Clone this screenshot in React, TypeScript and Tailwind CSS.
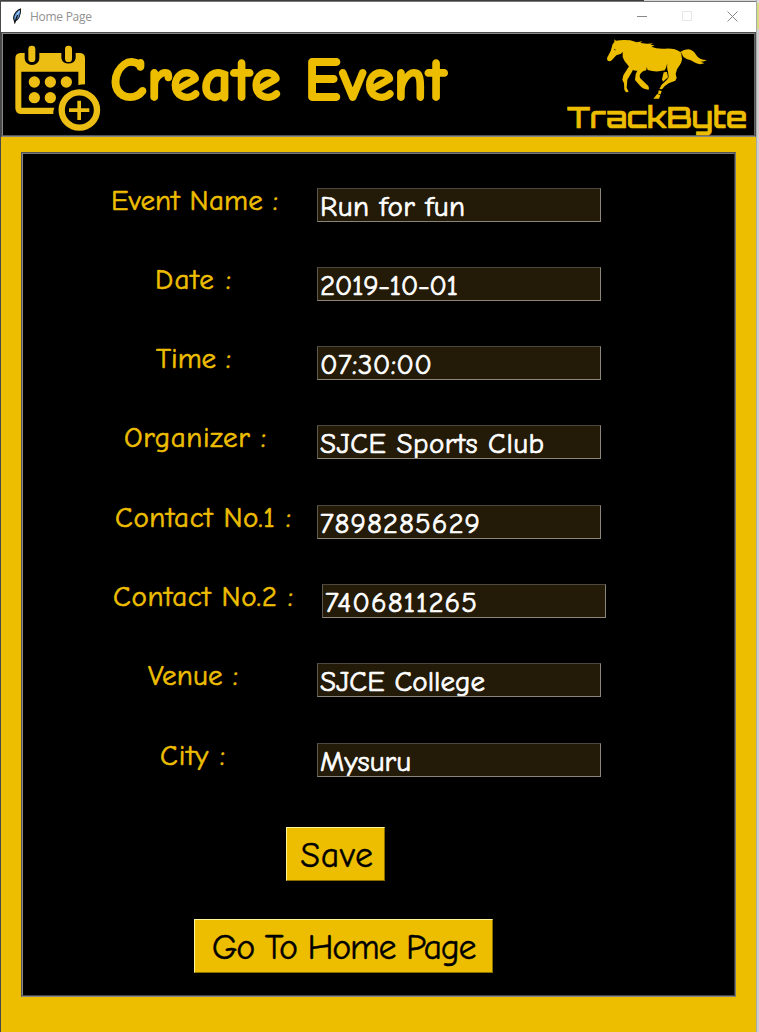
import React, { useLayoutEffect, useRef, useState } from 'react';

const script = "font-['Comic_Sans_MS','Comic_Neue','Noto_Sans',sans-serif]";

/** One line of text, tracked so that it fills the given width. */
function FitText({ text, width, className = '' }: { text: string; width: number; className?: string }) {
  const ref = useRef<HTMLSpanElement>(null);
  const [spacing, setSpacing] = useState(0);
  useLayoutEffect(() => {
    const measure = () => {
      const el = ref.current;
      if (!el) return;
      el.style.letterSpacing = '0px';
      const natural = el.getBoundingClientRect().width;
      const next = (width - natural) / Math.max(1, text.length - 1);
      el.style.letterSpacing = `${next}px`;
      setSpacing(next);
    };
    measure();
    document.fonts?.ready.then(measure);
  }, [text, width]);
  return (
    <span ref={ref} className={`inline-block whitespace-pre ${className}`} style={{ letterSpacing: `${spacing}px` }}>
      {text}
    </span>
  );
}

type Row = { label: string; lw: number; pad: string; value: string; vw: number; height: string; shift?: string };

const rows: Row[] = [
  { label: 'Event Name :', lw: 167, pad: 'pl-[88px]', value: 'Run for fun', vw: 145, height: 'h-[79px]' },
  { label: 'Date :', lw: 76, pad: 'pl-[132px]', value: '2019-10-01', vw: 138, height: 'h-[79px]' },
  { label: 'Time :', lw: 75, pad: 'pl-[133px]', value: '07:30:00', vw: 112, height: 'h-[79px]' },
  { label: 'Organizer :', lw: 142, pad: 'pl-[101px]', value: 'SJCE Sports Club', vw: 224, height: 'h-[80px]' },
  { label: 'Contact No.1 :', lw: 176, pad: 'pl-[92px]', value: '7898285629', vw: 160, height: 'h-[79px]' },
  { label: 'Contact No.2 :', lw: 180, pad: 'pl-[90px]', value: '7406811265', vw: 152, height: 'h-[79px]', shift: 'ml-[5px]' },
  { label: 'Venue :', lw: 90, pad: 'pl-[125px]', value: 'SJCE College', vw: 165, height: 'h-[80px]' },
  { label: 'City :', lw: 65, pad: 'pl-[137px]', value: 'Mysuru', vw: 91, height: 'h-[84px]' },
];

function Feather() {
  return (
    <svg width="12" height="18" viewBox="0 0 12 18">
      <path d="M9.5 1C6 2 3 6 2.5 10L3.5 13.5C7 12 10 7.500 9.5 1Z" fill="#5b96dc" stroke="#161616" strokeWidth="1.1" />
      <path d="M8.500 3L4.500 9" stroke="#a9cdf7" strokeWidth="1.2" />
      <path d="M6.500 7L3.500 15.500" stroke="#111" strokeWidth="1.2" />
    </svg>
  );
}

function CalendarPlus() {
  return (
    <svg width="86" height="87" viewBox="44 136 258 261" fill="#ecbd12">
      <path d="M60 160H73V176A22 20 0 0 0 117 176V160H183V176A22 20 0 0 0 226 176V160H240Q254 162 254 175V254Q244 254 234 256V216H63V324H162Q158 333 159 343H61Q45 342 45 325V176Q45 161 60 160Z" />
      <rect x="84" y="138" width="21" height="49" rx="10" />
      <rect x="194" y="138" width="21" height="49" rx="10" />
      <circle cx="102" cy="247" r="17" />
      <circle cx="150" cy="247" r="17" />
      <circle cx="198" cy="247" r="17" />
      <circle cx="102" cy="294" r="17" />
      <circle cx="150" cy="294" r="17" />
      <circle cx="237" cy="331" r="53" fill="none" stroke="#ecbd12" strokeWidth="19" />
      <path d="M231 303H242V326H267V337H242V361H231V337H206V326H231Z" />
    </svg>
  );
}

function Horse() {
  return (
    <svg width="103" height="62" viewBox="138 25 309 186" fill="#edbe00">
      <path d="M163 29L168 33Q188 29 211 32L230 38L247 35L241 40L262 42L279 41L271 45L284 47L274 51Q292 59 316 57Q344 55 361 67Q371 59 385 59Q400 61 408 75Q417 91 441 91Q432 97 420 96Q430 98 433 101Q416 107 403 98Q393 90 380 88Q370 84 364 74Q370 91 359 107Q348 119 347 133L350 145L346 153L326 161Q315 167 306 179L298 178L305 165L321 150L326 142L324 126Q320 118 322 101Q318 117 314 122Q288 129 263 121L260 112L259 122Q245 123 239 137L240 145L261 165Q269 171 266 180Q248 178 240 168L225 151L227 134L232 123Q215 124 205 108Q192 96 188 82L188 66L183 72L169 77L156 91Q149 98 142 92L141 85L152 64L158 43L163 38Z" />
      <path d="M209 107L219 120L217 125L202 150L200 174L206 186L198 188L193 180L192 161L187 150L190 137Z" />
      <path d="M311 128L321 127L324 143L309 156L306 149Z" />
      <path d="M296 182L305 184L302 194L294 193Z" />
      <path d="M292 192L301 197L297 207L280 207Z" />
      <path d="M162 59L167 61" stroke="#000" strokeWidth="2" />
      <path d="M363 69Q368 76 366 84" fill="none" stroke="#000" strokeWidth="2" />
    </svg>
  );
}

export default function App() {
  return (
    <div className="h-[1032px] w-[759px] overflow-hidden bg-[#494647] flex">
      <div className="w-px shrink-0 bg-[#484848]" />
      <main className="w-[755px] shrink-0 bg-[#edbe00] flex flex-col">
        <div className="h-px shrink-0 flex bg-[#403b3d]">
          <div className="w-[643px]" />
          <div className="flex-1 bg-[#d5d5d5]" />
        </div>
        <header className="h-[31px] shrink-0 bg-white border-t border-[#777] flex items-center pl-[10px] pr-[18px]">
          <Feather />
          <span className="ml-[7px] font-['Segoe_UI','Open_Sans',sans-serif] text-[12px] leading-4 text-[#929292]">
            <FitText text="Home Page" width={62} />
          </span>
          <div className="ml-auto flex items-center gap-[35px] pb-[2px]">
            <svg width="10" height="10"><path d="M0 5.500H10" stroke="#888" /></svg>
            <svg width="10" height="10"><rect x=".5" y=".5" width="9" height="9" fill="none" stroke="#e6e6e6" /></svg>
            <svg width="11" height="11"><path d="M.5 .5L10.500 10.500M10.500 .5L.5 10.500" stroke="#888" /></svg>
          </div>
        </header>
        <section className="h-[105px] shrink-0 border border-[#4c4c4c] border-b-[#888]">
          <div className="h-full border border-t-[#888] border-l-[#888] border-r-[#666] border-b-[#555] bg-black flex">
            <div className="pl-[12px] pt-[11px]"><CalendarPlus /></div>
            <h1 className={`ml-[9px] mt-[7px] h-[80px] w-[342px] flex text-[61px] leading-[79px] font-bold text-[#edbe00] [-webkit-text-stroke:1.8px_#edbe00] ${script}`}>
              <FitText text="Create" width={171} />
              <FitText text="Event" width={142} className="ml-[23px]" />
            </h1>
            <div className="ml-auto mr-[5px] w-[182px] pt-[4px] flex flex-col">
              <div className="pl-[39px]"><Horse /></div>
              <svg width="182" height="37" viewBox="0 0 182 37" className="overflow-visible">
                <text x="0" y="28" textLength="180" lengthAdjust="spacingAndGlyphs" fill="#edbe00" stroke="#edbe00" strokeWidth=".7" className="font-['Orbitron','Inter',sans-serif] text-[28.5px] font-medium">TrackByte</text>
              </svg>
            </div>
          </div>
        </section>
        <section className="ml-[20px] mt-[15px] h-[845px] w-[715px] shrink-0 border border-[#555] border-b-[#888] border-r-[#777]">
          <div className="h-full border border-t-[#777] border-l-[#888] border-r-[#3c3c3c] border-b-[#444] bg-black pt-[34px] flex flex-col">
            {rows.map((r) => (
              <div key={r.label} className={`${r.height} flex items-start shrink-0`}>
                <div className={`w-[294px] shrink-0 ${r.pad} h-[34px] text-[29px] leading-[26px] text-[#edbe00] [-webkit-text-stroke:0.6px_#edbe00] ${script}`}>
                  <FitText text={r.label} width={r.lw} />
                </div>
                <div className={`h-[34px] w-[284px] overflow-hidden border border-t-[#4d483f] border-l-[#5f594e] border-r-[#8b857a] border-b-[#8b857a] bg-[#231a08] pl-[2px] text-[29px] leading-[36px] text-white [-webkit-text-stroke:0.7px_#fff] ${script} ${r.shift ?? ''}`}>
                  <FitText text={r.value} width={r.vw} />
                </div>
              </div>
            ))}
            <button className={`ml-[263px] h-[54px] w-[99px] shrink-0 border border-t-[#fff799] border-l-[#fff799] border-r-[#8a6e00] border-b-[#8a6e00] bg-[#edbe00] pl-[3px] pt-[4px] text-[36px] leading-[48px] text-black [-webkit-text-stroke:0.4px_#000] ${script}`}>
              <FitText text="Save" width={73} />
            </button>
            <button className={`ml-[171px] mt-[38px] h-[54px] w-[299px] shrink-0 border border-t-[#fff799] border-l-[#fff799] border-r-[#8a6e00] border-b-[#8a6e00] bg-[#edbe00] pt-[4px] text-[36px] leading-[48px] text-black [-webkit-text-stroke:0.4px_#000] ${script}`}>
              <FitText text="Go To Home Page" width={265} />
            </button>
          </div>
        </section>
      </main>
      <aside className="w-[3px] shrink-0 bg-[#cecece] border-l border-[#aaa] flex flex-col">
        <div className="h-[3px] bg-[#ddd]" />
        <div className="h-[26px] bg-[#d9dc7c]" />
      </aside>
    </div>
  );
}
